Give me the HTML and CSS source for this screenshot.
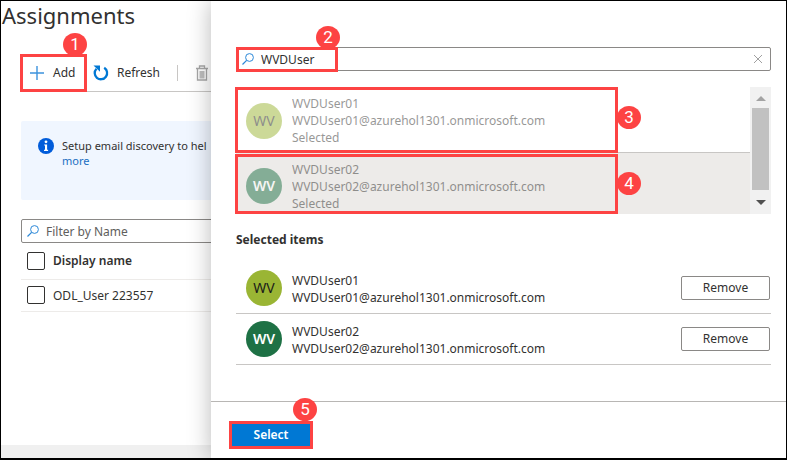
FILE: index.html
```html
<!DOCTYPE html>
<html lang="en">
<head>
<meta charset="utf-8">
<title>Assignments</title>
<link rel="stylesheet" href="styles.css">
</head>
<body>
<div class="frame">
  <main class="page">
    <h1>Assignments</h1>
    <div class="content">
      <div class="toolbar">
        <div class="callout callout-add">
          <button class="tool" type="button">
            <svg width="16" height="16" viewBox="0 0 16 16"><path d="M8 1v14M1 8h14" fill="none" stroke="#3c93dd" stroke-width="1.4"/></svg>
            Add
          </button>
          <span class="badge badge-add">1</span>
        </div>
        <button class="tool" type="button">
          <svg width="16" height="16" viewBox="0 0 16 16"><path d="M11.2 2.8A6.2 6.2 0 1 1 3.5 3.7" fill="none" stroke="#0078d4" stroke-width="2.3"/><path d="M0.5 0.5H7v6.3z" fill="#0078d4"/></svg>
          Refresh
        </button>
        <span class="divider"></span>
        <button class="tool" type="button" aria-label="Delete">
          <svg width="14" height="16" viewBox="0 0 14 16"><path d="M1 3.5h12M4.5 3V1h5v2M2.5 4v11h9V4" fill="none" stroke="#a6a6a6" stroke-width="1.3"/><path d="M4.5 6h5v7.5h-5z" fill="#bdbdbd"/></svg>
        </button>
      </div>
      <div class="notice">
        <svg width="16" height="16" viewBox="0 0 16 16"><circle cx="8" cy="8" r="8" fill="#015cda"/><circle cx="8" cy="3.8" r="1.4" fill="#fff"/><path d="M6.2 6.4h2.9v5.4h1v1.2H6v-1.2h1V7.6h-.8z" fill="#fff"/></svg>
        <p>Setup email discovery to hel<br><a href="#">more</a></p>
      </div>
      <label class="search">
        <svg width="12" height="12" viewBox="0 0 12 12"><circle cx="7.5" cy="4.5" r="3.9" fill="none" stroke="#2b88d8"/><path d="M4.6 7.4L.5 11.5" stroke="#2b88d8" stroke-width="1.2"/></svg>
        <input type="text" placeholder="Filter by Name" aria-label="Filter by Name">
      </label>
      <table>
        <thead><tr><th class="tick"><input type="checkbox" aria-label="Select all"></th><th>Display name</th></tr></thead>
        <tbody><tr><td class="tick"><input type="checkbox" id="odl"></td><td><label for="odl">ODL_User 223557</label></td></tr></tbody>
      </table>
    </div>
    <div class="strip"></div>
  </main>

  <section class="panel">
    <div class="panel-body">
      <div class="finder">
        <label class="search">
          <svg width="12" height="12" viewBox="0 0 12 12"><circle cx="7.5" cy="4.5" r="3.9" fill="none" stroke="#2b88d8"/><path d="M4.6 7.4L.5 11.5" stroke="#2b88d8" stroke-width="1.2"/></svg>
          <input type="text" value="WVDUser" aria-label="Search users">
          <button class="clear" type="button" aria-label="Clear"><svg width="10" height="10" viewBox="0 0 10 10"><path d="M1 1l8 8M9 1L1 9" stroke="#a0a0a0" fill="none"/></svg></button>
        </label>
        <span class="box box-search"></span>
        <span class="badge badge-search">2</span>
      </div>

      <div class="results">
        <ul>
          <li class="result">
            <span class="avatar lime">WV</span>
            <p>WVDUser01<br>WVDUser01@azurehol1301.onmicrosoft.com<br>Selected</p>
            <span class="box box-row"></span>
            <span class="badge badge-row">3</span>
          </li>
          <li class="result current">
            <span class="avatar green">WV</span>
            <p>WVDUser02<br>WVDUser02@azurehol1301.onmicrosoft.com<br>Selected</p>
            <span class="box box-row"></span>
            <span class="badge badge-row">4</span>
          </li>
        </ul>
        <div class="scrollbar">
          <svg width="10" height="5" viewBox="0 0 10 5"><path d="M5 0l5 5H0z" fill="#a3a3a3"/></svg>
          <span class="thumb"></span>
          <svg width="10" height="5" viewBox="0 0 10 5"><path d="M0 0h10L5 5z" fill="#505050"/></svg>
        </div>
      </div>

      <h2>Selected items</h2>
      <ul>
        <li class="chosen">
          <span class="avatar lime">WV</span>
          <p>WVDUser01<br>WVDUser01@azurehol1301.onmicrosoft.com</p>
          <button class="remove" type="button">Remove</button>
        </li>
        <li class="chosen">
          <span class="avatar green">WV</span>
          <p>WVDUser02<br>WVDUser02@azurehol1301.onmicrosoft.com</p>
          <button class="remove" type="button">Remove</button>
        </li>
      </ul>
    </div>
    <footer>
      <div class="callout callout-select">
        <button class="select" type="button">Select</button>
        <span class="badge badge-select">5</span>
      </div>
    </footer>
  </section>
</div>
</body>
</html>
```
FILE: styles.css
```css
* { box-sizing: border-box; }
body, h1, h2, p, ul { margin: 0; padding: 0; }
ul { list-style: none; }
body, button, input {
  font-family: "Noto Sans", "Open Sans", sans-serif;
  font-size: 12px;
  color: #323130;
}
button { border: 0; padding: 0; background: none; white-space: nowrap; }
svg { display: block; flex: none; }

.frame {
  display: flex;
  min-height: 100vh;
  border: 1px solid #000;
  border-bottom-width: 2px;
  background: #fff;
}

/* Page behind the panel */
.page {
  flex: 0 0 210px;
  display: flex;
  flex-direction: column;
  overflow: hidden;
}
h1 {
  padding-left: 1px;
  font-size: 22px;
  font-weight: 400;
  line-height: 28px;
}
.content { flex: 1; padding: 25px 0 0 20px; }
.toolbar {
  display: flex;
  align-items: center;
  gap: 17px;
  height: 38px;
  border-bottom: 1px solid #c8c6c4;
}
.tool { display: flex; align-items: center; gap: 8px; }
.divider { width: 1px; height: 16px; background: #c8c6c4; }
.callout { position: relative; border: 3px solid #fd4343; }
.callout-add {
  display: flex;
  width: 67px;
  height: 38px;
  margin: 0 -11px 0 -1px;
  padding-left: 6px;
}
.notice {
  display: flex;
  gap: 8px;
  width: 400px;
  height: 79px;
  margin-top: 29px;
  padding: 17px;
  border-radius: 2px;
  background: #f0f6ff;
}
.notice p { font-size: 11px; line-height: 15px; white-space: nowrap; }
.notice a { color: #1b6ec2; text-decoration: none; }
.search {
  display: flex;
  align-items: center;
  gap: 7px;
  height: 24px;
  padding: 0 6px 0 5px;
  border: 1px solid #8a8886;
  border-radius: 2px;
}
.search input {
  flex: 1;
  min-width: 0;
  padding: 0;
  border: 0;
  outline: 0;
  background: none;
}
.search input::placeholder { color: #605e5c; opacity: 1; }
.page .search { width: 400px; margin-top: 19px; }
table { width: 400px; border-collapse: collapse; text-align: left; }
th, td { padding: 0; border-bottom: 1px solid #edebe9; }
th { height: 36px; font-weight: 600; }
td { height: 32px; }
.tick { width: 32px; padding-left: 6px; }
.tick input {
  display: block;
  appearance: none;
  width: 18px;
  height: 18px;
  margin: 0;
  border: 1px solid #323130;
  border-radius: 2px;
}
.strip { height: 13px; background: #f0f0f0; }

/* Side panel */
.panel {
  position: relative;
  flex: 1;
  display: flex;
  flex-direction: column;
  min-width: 0;
  background: #fff;
  box-shadow: 0 0 22px rgba(0, 0, 0, 0.28);
  clip-path: inset(0 0 0 -30px);
}
.panel-body { flex: 1; padding: 46px 15px 0 25px; }
.finder { position: relative; }
.panel .search { padding-right: 7px; }
.results { display: flex; margin-top: 16px; height: 127px; }
.results ul { flex: 1; display: flex; flex-direction: column; }
.result {
  position: relative;
  display: flex;
  align-items: center;
  gap: 10px;
  height: 66px;
  padding: 2px 10px 0;
  border-bottom: 1px solid #c8c6c4;
}
.result.current { flex: 1; border-bottom: 0; padding-top: 5px; background: #edebe9; }
.result p, .result .avatar { opacity: 0.5; }
.result p, .chosen p { line-height: 17px; white-space: nowrap; }
.avatar {
  flex: none;
  width: 36px;
  height: 36px;
  border-radius: 50%;
  font-size: 14px;
  line-height: 36px;
  text-align: center;
}
.lime { background: #9ab534; color: #1b1a19; }
.green { background: #1e7145; color: #fff; font-weight: 600; }
.scrollbar {
  display: flex;
  flex-direction: column;
  align-items: center;
  justify-content: space-between;
  width: 21px;
  padding: 9px 0;
  background: #f1f1f1;
}
.thumb { width: 17px; height: 82px; margin-bottom: 3px; background: #c1c1c1; }
h2 { margin: 17px 0 14px; font-size: 12px; font-weight: 700; line-height: 18px; }
.chosen {
  display: flex;
  align-items: center;
  gap: 10px;
  height: 51px;
  padding-left: 10px;
  border-bottom: 1px solid #c8c6c4;
}
.chosen p { padding-top: 2px; }
.remove {
  width: 89px;
  height: 24px;
  margin: 0 1px 0 auto;
  padding-bottom: 2px;
  border: 1px solid #8a8886;
  border-radius: 2px;
}
footer { display: flex; height: 57px; padding: 19px 18px; border-top: 1px solid #b8b6b4; }
.select {
  display: block;
  width: 78px;
  height: 22px;
  padding-bottom: 2px;
  background: #0078d4;
  color: #fff;
  font-weight: 600;
}
.callout-select { height: 28px; }

/* Numbered highlights over the controls */
.box { position: absolute; border: 3px solid #fd4343; pointer-events: none; }
.box-search { inset: 0 auto -1px 0; width: 102px; }
.box-row { inset: 0 auto -1px -1px; width: 383px; }
.current .box-row { inset: 1px auto 0 -1px; }
.badge {
  position: absolute;
  width: 24px;
  height: 23px;
  border-radius: 50%;
  background: #fd4343;
  color: #fff;
  font: 17px/23px Roboto, sans-serif;
  text-align: center;
}
.badge-add { top: -24px; left: 40px; }
.badge-search { top: -21px; left: 80px; }
.badge-row { top: 19px; left: 381px; }
.badge-select { top: -26px; right: -7px; }
```
